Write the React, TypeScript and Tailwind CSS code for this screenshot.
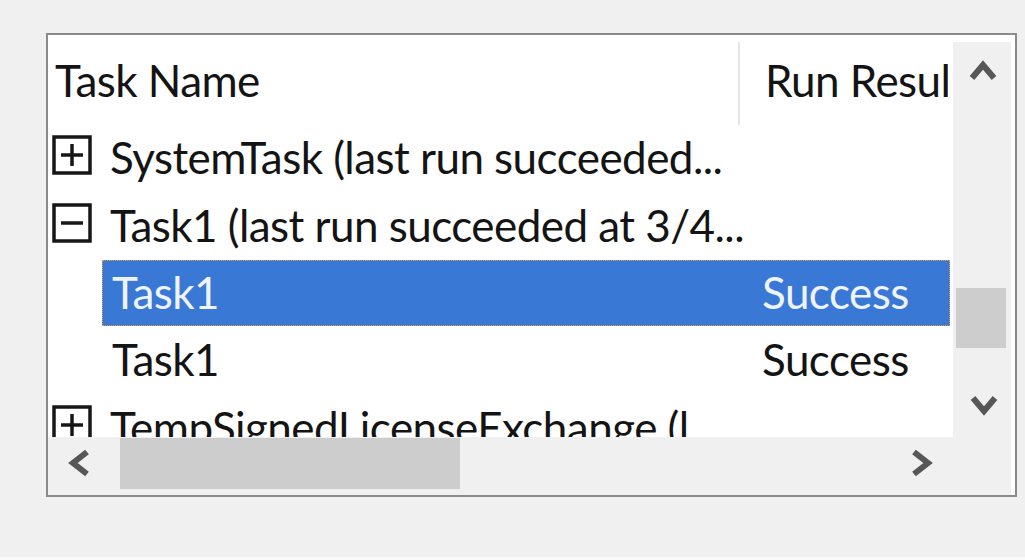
type Row = {
  name: string
  result?: string
  group?: 'open' | 'closed'
  selected?: boolean
}

const ROWS: Row[] = [
  { name: 'SystemTask (last run succeeded...', group: 'closed' },
  { name: 'Task1 (last run succeeded at 3/4...', group: 'open' },
  { name: 'Task1', result: 'Success', selected: true },
  { name: 'Task1', result: 'Success' },
  { name: 'TempSignedLicenseExchange (l...', group: 'closed' },
]

const CHEVRONS = {
  up: { w: 28, h: 22, points: '3,18 14,5 25,18' },
  down: { w: 28, h: 22, points: '3,4 14,17 25,4' },
  left: { w: 26, h: 28, points: '20,3 6,14 20,25' },
  right: { w: 26, h: 28, points: '6,3 20,14 6,25' },
}

function Chevron({ dir }: { dir: keyof typeof CHEVRONS }) {
  const c = CHEVRONS[dir]
  return (
    <svg width={c.w} height={c.h} viewBox={`0 0 ${c.w} ${c.h}`} aria-hidden="true">
      <polyline
        points={c.points}
        fill="none"
        stroke="#575757"
        strokeWidth="6"
        strokeLinejoin="miter"
      />
    </svg>
  )
}

// the +/- box in front of a task group
function Expander({ open }: { open: boolean }) {
  return (
    <svg width="40" height="40" viewBox="0 0 40 40" className="mt-[10px] shrink-0" aria-hidden="true">
      <rect x="2" y="2" width="36" height="36" fill="white" stroke="#161616" strokeWidth="3.5" />
      <line x1="9" y1="20" x2="31" y2="20" stroke="#161616" strokeWidth="3.5" />
      {!open && <line x1="20" y1="9" x2="20" y2="31" stroke="#161616" strokeWidth="3.5" />}
    </svg>
  )
}

function TaskRow({ row }: { row: Row }) {
  if (row.group) {
    return (
      <div className="flex h-[67.5px] shrink-0 items-start gap-[18px] pl-[4px]">
        <Expander open={row.group === 'open'} />
        <span className="pt-[10px] whitespace-nowrap">{row.name}</span>
      </div>
    )
  }

  return (
    <div className="flex h-[67.5px] shrink-0 items-start pl-[54px] pr-[3px]">
      <div
        className={
          row.selected
            ? 'flex h-[66px] flex-1 items-start border-[1.5px] border-dotted border-[#e0a050] bg-[#3a78d6] text-[#eef3fc]'
            : 'flex h-[66px] flex-1 items-start border-[1.5px] border-transparent'
        }
      >
        <span className="w-[634px] pt-[8.5px] pl-[9px] whitespace-nowrap">{row.name}</span>
        <span className="pt-[8.5px] pl-[25px] whitespace-nowrap">{row.result}</span>
      </div>
    </div>
  )
}

export default function App() {
  return (
    <div className="flex h-[560px] w-[1025px] flex-col bg-[#f0f0f0] font-['Lato','Noto_Sans',sans-serif] text-[44px] leading-none tracking-[-0.55px] text-[#141414]">
      <div className="flex-1 pt-[33px] pl-[46px]">
        <div className="flex h-[464px] w-[971px] flex-col border-2 border-[#8a8a8a] bg-white">
          <div className="flex h-[402px]">
            {/* list view */}
            <div className="flex w-[905px] flex-col overflow-hidden">
              <div className="flex h-[90px] shrink-0">
                <div className="w-[690px] pt-[23px] pl-[7px] whitespace-nowrap">Task Name</div>
                <div className="mt-[7px] w-[2px] bg-[#e6e6e6]" />
                <div className="flex-1 overflow-hidden pt-[23px] pl-[25px] whitespace-nowrap">
                  Run Result
                </div>
                <div className="w-[5px]" />
              </div>
              {ROWS.map((row, i) => (
                <TaskRow key={i} row={row} />
              ))}
            </div>

            {/* vertical scrollbar */}
            <div className="mt-[7px] flex w-[58px] flex-col bg-[#f0f0f0]">
              <div className="flex h-[58px] items-center justify-center pl-[2px]">
                <Chevron dir="up" />
              </div>
              <div className="flex-1">
                <div className="mt-[188px] ml-[3px] h-[60px] w-[50px] bg-[#cdcdcd]" />
              </div>
              <div className="flex h-[58px] items-center justify-center pb-[6px] pl-[4px]">
                <Chevron dir="down" />
              </div>
            </div>
            <div className="w-[4px]" />
          </div>

          {/* horizontal scrollbar */}
          <div className="mr-[4px] flex flex-1 items-start bg-[#f0f0f0]">
            <div className="flex h-[52px] w-[64px] items-center justify-center">
              <Chevron dir="left" />
            </div>
            <div className="mt-[1px] ml-[8px] h-[51px] w-[340px] bg-[#cdcdcd]" />
            <div className="flex-1" />
            <div className="flex h-[52px] w-[64px] items-center justify-center">
              <Chevron dir="right" />
            </div>
            <div className="w-[58px]" />
          </div>
        </div>
      </div>
      <div className="h-[3px] bg-[#fafafa]" />
    </div>
  )
}
